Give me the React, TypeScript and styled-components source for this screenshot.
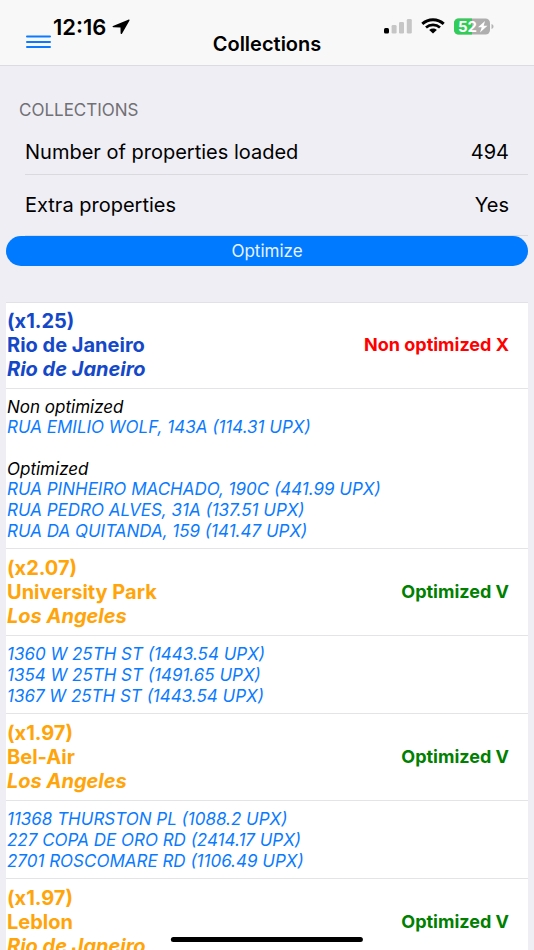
import React from "react";
import styled, { createGlobalStyle } from "styled-components";

const GlobalStyle = createGlobalStyle`
  *, *::before, *::after { box-sizing: border-box; }
  body {
    margin: 0;
    background: #efeef4;
    color: #000;
    font-family: Inter, "Liberation Sans", sans-serif;
  }
`;

const Screen = styled.div`
  display: flex;
  flex-direction: column;
  height: 100vh;
  overflow: hidden;
`;

const TopBar = styled.header`
  display: grid;
  grid-template-columns: 1fr auto 1fr;
  flex: none;
  padding: 14px 26px 10px;
  background: #f8f8f8;
  border-bottom: 1px solid #dcdbe0;
`;

const Leading = styled.div`
  display: flex;
  align-items: flex-start;
  gap: 2px;
`;

const MenuButton = styled.button`
  display: flex;
  margin: 20px 0 0;
  padding: 0;
  border: 0;
  background: none;
  color: #0a7aff;
`;

const Clock = styled.time`
  font-size: 22px;
  font-weight: 600;
  line-height: 26px;
`;

const ArrowIcon = styled.svg`
  margin: 5px 0 0 4px;
`;

const Title = styled.h1`
  margin: 19px 0 0;
  font-size: 20px;
  font-weight: 600;
  line-height: 22px;
`;

const StatusIcons = styled.div`
  display: flex;
  justify-content: flex-end;
  align-items: center;
  gap: 9px;
  height: 24px;
  padding-right: 14px;
`;

const Scroller = styled.main`
  flex: 1;
  min-height: 0;
  padding: 34px 6px 0;
  overflow-y: auto;
  scrollbar-width: none;
`;

const SectionTitle = styled.h2`
  margin: 0 0 9px 13px;
  color: #717075;
  font-size: 17px;
  font-weight: 400;
  line-height: 20px;
`;

const Stats = styled.dl`
  margin: 0 0 0 19px;
`;

const Stat = styled.div<{ $tall?: boolean }>`
  display: flex;
  justify-content: space-between;
  padding: ${(p) => (p.$tall ? 18 : 11)}px 19px ${(p) => (p.$tall ? 18 : 10)}px 0;
  border-bottom: 1px solid #dad9de;
  font-size: 20px;
  line-height: 24px;
`;

const StatValue = styled.dd`
  margin: 0;
`;

const OptimizeButton = styled.button`
  display: block;
  width: 100%;
  margin-bottom: 36px;
  padding: 5px;
  border: 0;
  border-radius: 15px;
  background: #007aff;
  color: #e9f3ff;
  font-family: inherit;
  font-size: 17px;
  line-height: 20px;
`;

const CollectionList = styled.div`
  border-top: 1px solid #e2e1e5;
  background: #fff;
`;

const CollectionHeader = styled.div`
  display: flex;
  align-items: center;
  justify-content: space-between;
  padding: 7px 19px 7px 1px;
  border-bottom: 1px solid #e4e4e7;
`;

const Collection = styled.section`
  &:first-child > ${CollectionHeader} {
    padding-top: 6px;
  }
`;

const Name = styled.h3<{ $color: string }>`
  display: flex;
  flex-direction: column;
  margin: 0;
  color: ${(p) => p.$color};
  font-size: 20px;
  font-weight: 700;
  line-height: 24px;
`;

const City = styled.em`
  font-style: italic;
`;

const Status = styled.strong<{ $done: boolean }>`
  color: ${(p) => (p.$done ? "#008000" : "#ff0000")};
  font-size: 18px;
  font-weight: 700;
  line-height: 24px;
`;

const Details = styled.div`
  display: flex;
  flex-direction: column;
  gap: 22px;
  padding: 8px 1px 7px;
  border-bottom: 1px solid #e4e4e7;
  font-size: 17px;
  font-style: italic;
  line-height: 20px;
`;

const GroupTitle = styled.h4`
  margin: 0;
  font-size: 17px;
  font-weight: 400;
`;

const Properties = styled.ul`
  display: flex;
  flex-direction: column;
  align-items: flex-start;
  gap: 1px;
  margin: 0;
  padding: 0;
  list-style: none;
`;

const PropertyLink = styled.a`
  color: #0a7aff;
  text-decoration: none;
`;

const HomeIndicator = styled.div`
  position: fixed;
  bottom: 8px;
  left: 50%;
  width: 36%;
  height: 5px;
  border-radius: 3px;
  background: #000;
  transform: translateX(-50%);
`;

type Group = { title?: string; items: string[] };
type Entry = {
  boost: string;
  name: string;
  city: string;
  color: string;
  done: boolean;
  groups: Group[];
};

const BLUE = "#1448c8";
const ORANGE = "#ffa50a";

const collections: Entry[] = [
  {
    boost: "(x1.25)",
    name: "Rio de Janeiro",
    city: "Rio de Janeiro",
    color: BLUE,
    done: false,
    groups: [
      { title: "Non optimized", items: ["RUA EMILIO WOLF, 143A (114.31 UPX)"] },
      {
        title: "Optimized",
        items: [
          "RUA PINHEIRO MACHADO, 190C (441.99 UPX)",
          "RUA PEDRO ALVES, 31A (137.51 UPX)",
          "RUA DA QUITANDA, 159 (141.47 UPX)",
        ],
      },
    ],
  },
  {
    boost: "(x2.07)",
    name: "University Park",
    city: "Los Angeles",
    color: ORANGE,
    done: true,
    groups: [
      {
        items: [
          "1360 W 25TH ST (1443.54 UPX)",
          "1354 W 25TH ST (1491.65 UPX)",
          "1367 W 25TH ST (1443.54 UPX)",
        ],
      },
    ],
  },
  {
    boost: "(x1.97)",
    name: "Bel-Air",
    city: "Los Angeles",
    color: ORANGE,
    done: true,
    groups: [
      {
        items: [
          "11368 THURSTON PL (1088.2 UPX)",
          "227 COPA DE ORO RD (2414.17 UPX)",
          "2701 ROSCOMARE RD (1106.49 UPX)",
        ],
      },
    ],
  },
  {
    boost: "(x1.97)",
    name: "Leblon",
    city: "Rio de Janeiro",
    color: ORANGE,
    done: true,
    groups: [],
  },
];

function MenuIcon() {
  return (
    <svg width="25" height="15" viewBox="0 0 25 15" fill="none" stroke="currentColor" strokeWidth="2" strokeLinecap="round" aria-hidden="true">
      <path d="M1 2.6h23M1 7.9h23M1 13h23" />
    </svg>
  );
}

function SignalIcon() {
  return (
    <svg width="28" height="16" viewBox="0 0 28 16" aria-label="Signal">
      <rect x="0" y="10" width="5" height="5.5" rx="1.5" fill="#000" />
      <rect x="7.6" y="7" width="5" height="8.5" rx="1.3" fill="#c6c6c6" />
      <rect x="15" y="4" width="5" height="11.5" rx="1.3" fill="#c6c6c6" />
      <rect x="22.8" y="1" width="5" height="14.5" rx="1.3" fill="#c6c6c6" />
    </svg>
  );
}

function WifiIcon() {
  return (
    <svg width="24" height="16" viewBox="0 0 24 16" fill="none" stroke="#000" aria-label="Wi-Fi">
      <path d="M1.3 5.9C7.2.3 16.8.3 22.7 5.9" strokeWidth="2.9" />
      <path d="M5 9.5c4-3.6 10-3.6 14 0" strokeWidth="2.7" />
      <path d="M8.2 11.9c2.2-1.8 5.4-1.8 7.6 0L12 15.4z" fill="#000" stroke="none" />
    </svg>
  );
}

function BatteryIcon() {
  return (
    <svg width="40" height="17" viewBox="0 0 40 17" aria-label="Battery 52%, charging">
      <rect x="0" y="0.5" width="36" height="16" rx="4.5" fill="#aeaeae" />
      <path d="M4.5.5H18v16H4.5A4.5 4.5 0 0 1 0 12V5A4.5 4.5 0 0 1 4.5.5z" fill="#32cd59" />
      <path d="M37.5 6c1.5.4 2 1.4 2 2.5s-.5 2.1-2 2.500z" fill="#b4b4b4" />
      <text x="4" y="14" fontSize="15" fontWeight="700" fill="#fff">52</text>
      <path d="M31 3L24 9.300h3.700L26 14.500 33.500 7.800h-3.800z" fill="#fff" />
    </svg>
  );
}

export default function App() {
  return (
    <Screen>
      <GlobalStyle />
      <TopBar>
        <Leading>
          <MenuButton type="button" aria-label="Menu">
            <MenuIcon />
          </MenuButton>
          <Clock>12:16</Clock>
          <ArrowIcon width="18" height="16" viewBox="0 0 18 16" aria-hidden="true">
            <path d="M16.3.7L1 7.1c-.7.4-.5 1.2.4 1.2l7.1.1.1 5.900c0 .9 1 1.100 1.500.3L17.500 1.500c.3-.6-.4-1.100-1.200-.8z" />
          </ArrowIcon>
        </Leading>
        <Title>Collections</Title>
        <StatusIcons>
          <SignalIcon />
          <WifiIcon />
          <BatteryIcon />
        </StatusIcons>
      </TopBar>
      <Scroller>
        <SectionTitle>COLLECTIONS</SectionTitle>
        <Stats>
          <Stat>
            <dt>Number of properties loaded</dt>
            <StatValue>494</StatValue>
          </Stat>
          <Stat $tall>
            <dt>Extra properties</dt>
            <StatValue>Yes</StatValue>
          </Stat>
        </Stats>
        <OptimizeButton type="button">Optimize</OptimizeButton>
        <CollectionList>
          {collections.map((c) => (
            <Collection key={c.name}>
              <CollectionHeader>
                <Name $color={c.color}>
                  <span>{c.boost}</span>
                  <span>{c.name}</span>
                  <City>{c.city}</City>
                </Name>
                <Status $done={c.done}>{c.done ? "Optimized V" : "Non optimized X"}</Status>
              </CollectionHeader>
              {c.groups.length > 0 && (
                <Details>
                  {c.groups.map((g) => (
                    <div key={g.items[0]}>
                      {g.title && <GroupTitle>{g.title}</GroupTitle>}
                      <Properties>
                        {g.items.map((item) => (
                          <li key={item}>
                            <PropertyLink href="#">{item}</PropertyLink>
                          </li>
                        ))}
                      </Properties>
                    </div>
                  ))}
                </Details>
              )}
            </Collection>
          ))}
        </CollectionList>
      </Scroller>
      <HomeIndicator />
    </Screen>
  );
}
